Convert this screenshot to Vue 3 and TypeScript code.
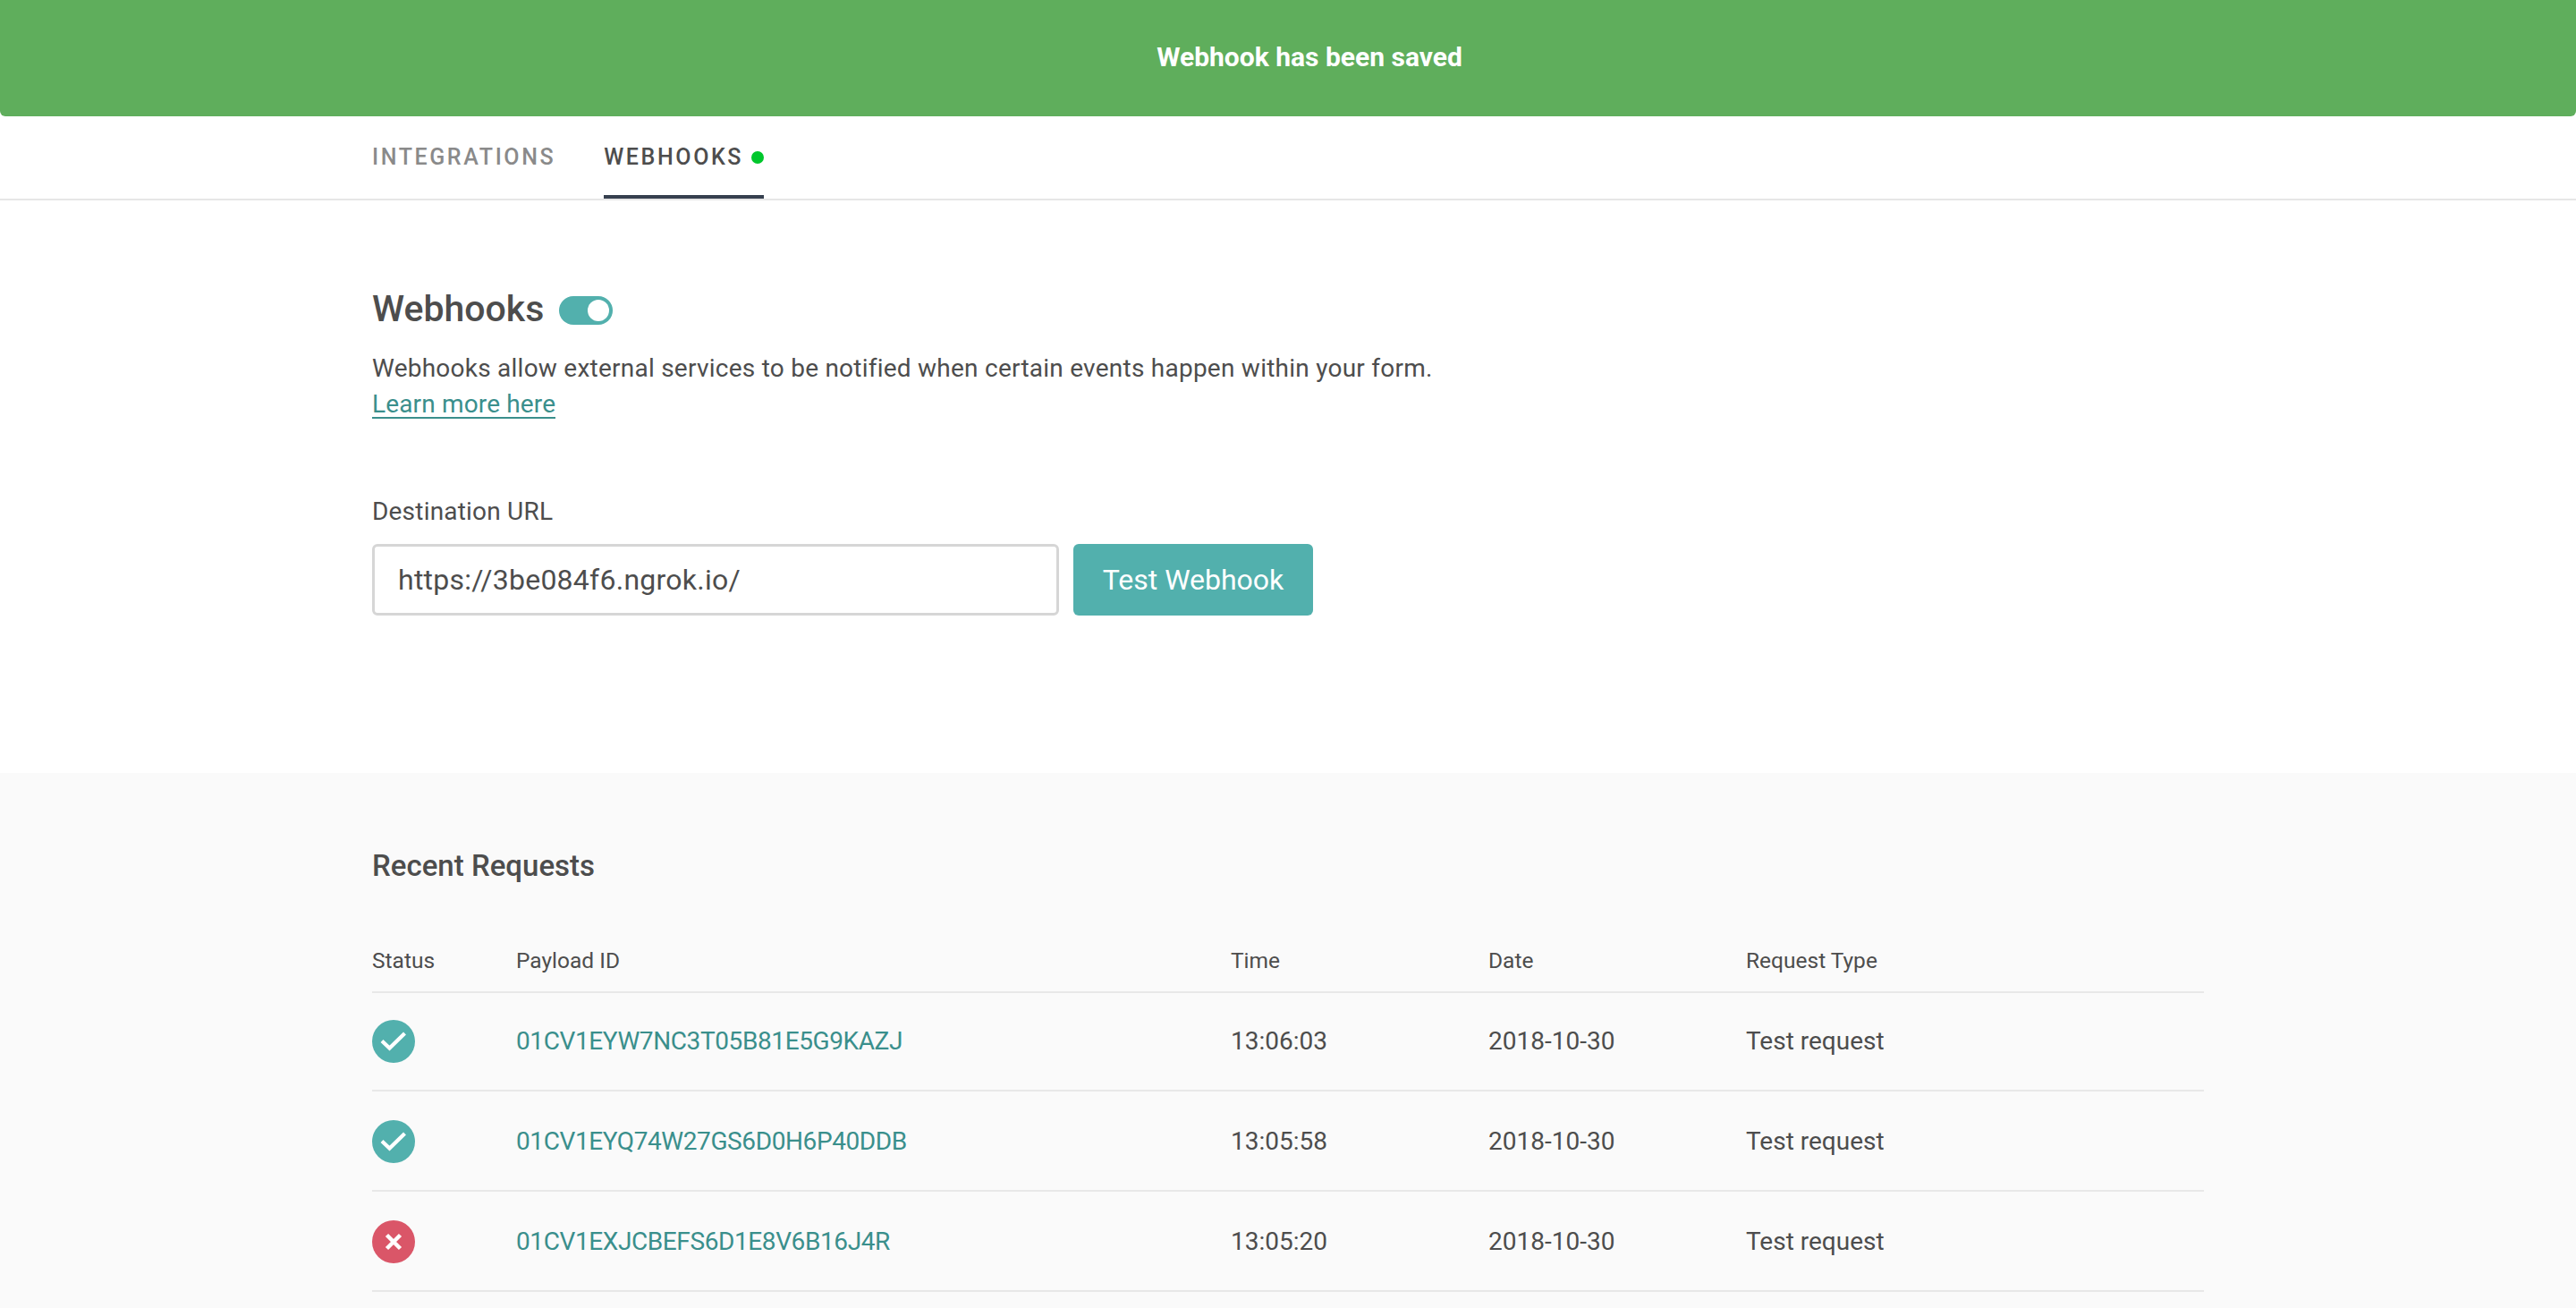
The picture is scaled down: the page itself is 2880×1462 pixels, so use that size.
<script setup lang="ts">
interface RequestRow {
  ok: boolean
  id: string
  time: string
  date: string
  type: string
}

const rows: RequestRow[] = [
  { ok: true, id: '01CV1EYW7NC3T05B81E5G9KAZJ', time: '13:06:03', date: '2018-10-30', type: 'Test request' },
  { ok: true, id: '01CV1EYQ74W27GS6D0H6P40DDB', time: '13:05:58', date: '2018-10-30', type: 'Test request' },
  { ok: false, id: '01CV1EXJCBEFS6D1E8V6B16J4R', time: '13:05:20', date: '2018-10-30', type: 'Test request' },
]
</script>

<template>
  <div class="page">
    <div class="banner">Webhook has been saved</div>

    <nav class="tabs">
      <a class="tab">INTEGRATIONS</a>
      <a class="tab active">WEBHOOKS<span class="dot"></span></a>
    </nav>

    <section class="settings">
      <div class="title-row">
        <h1>Webhooks</h1>
        <span class="toggle"><span class="knob"></span></span>
      </div>
      <p class="intro">Webhooks allow external services to be notified when certain events happen within your form.</p>
      <a class="learn">Learn more here</a>

      <label class="field-label">Destination URL</label>
      <div class="url-row">
        <input class="url" value="https://3be084f6.ngrok.io/" />
        <button class="test">Test Webhook</button>
      </div>
    </section>

    <section class="recent">
      <h2>Recent Requests</h2>
      <div class="row head">
        <div>Status</div>
        <div>Payload ID</div>
        <div>Time</div>
        <div>Date</div>
        <div>Request Type</div>
      </div>
      <div v-for="row of rows" :key="row.id" class="row">
        <div>
          <svg class="status" viewBox="0 0 48 48">
            <circle cx="24" cy="24" r="24" :fill="row.ok ? '#52b0ad' : '#da5668'" />
            <path v-if="row.ok" d="M11 23.5L19.5 31.5L36.5 15" fill="none" stroke="#fff" stroke-width="4.2" />
            <path v-else d="M16.5 16.5l15 15M31.5 16.5l-15 15" fill="none" stroke="#fff" stroke-width="4.5" />
          </svg>
        </div>
        <a class="payload cell">{{ row.id }}</a>
        <div class="cell">{{ row.time }}</div>
        <div class="cell">{{ row.date }}</div>
        <div class="cell">{{ row.type }}</div>
      </div>
    </section>
  </div>
</template>

<style>
html, body {
  margin: 0;
  height: 100%;
  overflow: hidden;
}
</style>

<style scoped>
.page {
  display: flex;
  flex-direction: column;
  height: 1462px;
  font-family: Roboto, "Liberation Sans", sans-serif;
  color: #4d4d4d;
  background: #fff;
}

.banner {
  height: 130px;
  line-height: 128px;
  padding-left: 48px;
  text-align: center;
  background: #5fae5c;
  color: #fff;
  font-size: 30px;
  font-weight: 700;
  border-radius: 0 0 6px 6px;
}

.tabs {
  display: flex;
  gap: 54px;
  padding-left: 416px;
  height: 92px;
  border-bottom: 2px solid #e6e6e6;
}

.tab {
  display: flex;
  align-items: center;
  height: 92px;
  box-sizing: border-box;
  padding-top: 3px;
  border-bottom: 4px solid transparent;
  font-size: 25px;
  font-weight: 500;
  letter-spacing: 2.6px;
  color: #8a8a8a;
}

.tab.active {
  color: #4d4d4d;
  border-bottom-color: #36404f;
}

.dot {
  width: 14px;
  height: 14px;
  margin-left: 9px;
  border-radius: 50%;
  background: #00c72c;
}

.settings {
  height: 640px;
  box-sizing: border-box;
  padding: 96px 0 0 416px;
}

.title-row {
  display: flex;
  align-items: center;
  gap: 17px;
  height: 50px;
}

h1 {
  margin: 0;
  font-size: 41px;
  font-weight: 500;
}

.toggle {
  position: relative;
  width: 60px;
  height: 32px;
  margin-top: 4px;
  border-radius: 16px;
  background: #52b0ad;
}

.knob {
  position: absolute;
  top: 4px;
  right: 4px;
  width: 24px;
  height: 24px;
  border-radius: 50%;
  background: #fff;
}

.intro {
  margin: 22px 0 0;
  font-size: 28px;
  line-height: 40px;
  letter-spacing: 0.24px;
}

.learn {
  display: inline-block;
  margin-top: 6px;
  font-size: 28px;
  line-height: 28px;
  letter-spacing: 0.15px;
  color: #3a8f8c;
  border-bottom: 2px solid #3a8f8c;
}

.field-label {
  display: block;
  margin-top: 84px;
  font-size: 28px;
  line-height: 40px;
  letter-spacing: 0.2px;
}

.url-row {
  display: flex;
  gap: 16px;
  margin-top: 16px;
}

.url {
  width: 768px;
  height: 80px;
  box-sizing: border-box;
  padding: 0 26px;
  border: 3px solid #d6d6d6;
  border-radius: 6px;
  font: inherit;
  font-size: 32px;
  letter-spacing: 0.25px;
  color: #4d4d4d;
  outline: none;
}

.test {
  width: 268px;
  height: 80px;
  border: 0;
  border-radius: 6px;
  background: #52b0ad;
  color: #fff;
  font: inherit;
  font-size: 32px;
}

.recent {
  flex: 1;
  padding: 0 416px;
  background: #fafafa;
}

h2 {
  margin: 0;
  padding-top: 84px;
  font-size: 33px;
  line-height: 40px;
  font-weight: 500;
}

.row {
  display: grid;
  grid-template-columns: 161px 799px 288px 288px 512px;
  align-items: center;
  height: 112px;
  box-sizing: border-box;
  padding-top: 2px;
  border-bottom: 2px solid #e8e8e8;
  font-size: 28px;
}

.row.head {
  height: 78px;
  margin-top: 44px;
  padding-top: 6px;
  font-size: 24.5px;
}

.head + .row {
  height: 110px;
  padding-top: 0;
}

.cell {
  padding-bottom: 2px;
}

.status {
  display: block;
  width: 48px;
  height: 48px;
}

.payload {
  color: #3a8f8c;
  letter-spacing: -0.4px;
}
</style>
